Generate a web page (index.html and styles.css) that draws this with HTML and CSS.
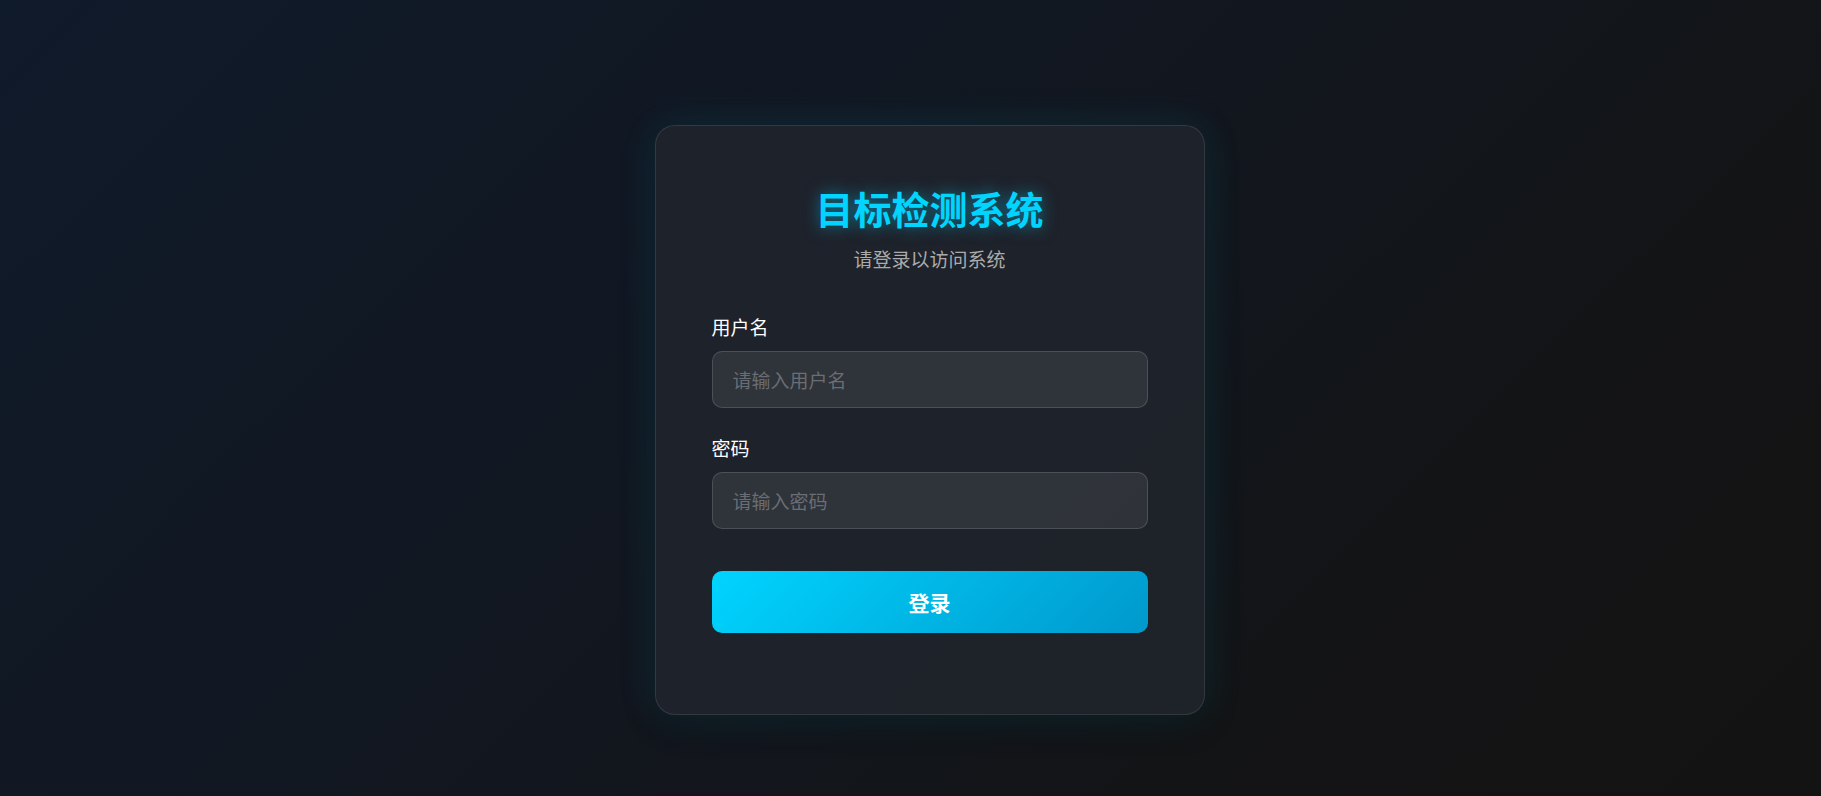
FILE: index.html
```html
<!DOCTYPE html>
<html lang="zh-CN">
<head>
    <meta charset="UTF-8">
    <meta name="viewport" content="width=device-width, initial-scale=1.0">
    <title>目标检测系统 - 登录</title>
    <link rel="stylesheet" href="styles.css">
</head>
<body>
    <!-- Login card -->
    <div class="login-card">
        <div class="login-header">
            <h1>目标检测系统</h1>
            <p>请登录以访问系统</p>
        </div>

        <form class="login-form" onsubmit="return false;">
            <div class="form-group">
                <label for="username">用户名</label>
                <input type="text" id="username" placeholder="请输入用户名">
            </div>
            <div class="form-group">
                <label for="password">密码</label>
                <input type="password" id="password" placeholder="请输入密码">
            </div>
            <button type="submit" class="login-btn">登录</button>
        </form>
    </div>
</body>
</html>
```

FILE: styles.css
```css
/* Reset and basic styles */
* {
    margin: 0;
    padding: 0;
    box-sizing: border-box;
}

body {
    font-family: "Noto Sans CJK SC", "Noto Sans", Arial, sans-serif;
    background: linear-gradient(135deg, #0f1a2a 0%, #121720 45%, #131416 75%, #131313 100%);
    min-height: 100vh;
    display: flex;
    justify-content: center;
    align-items: flex-start;
    padding: 125px 0 0 38px;
    color: #fff;
}

/* Card */
.login-card {
    width: 550px;
    padding: 56px 56px 81px;
    background: rgba(33, 36, 45, 0.85);
    border: 1px solid rgba(255, 255, 255, 0.1);
    border-radius: 20px;
    box-shadow: 0 0 40px rgba(0, 212, 255, 0.12), 0 8px 32px rgba(0, 0, 0, 0.25);
}

.login-header {
    text-align: center;
    margin-bottom: 40px;
}

.login-header h1 {
    font-size: 38px;
    line-height: 52px;
    font-weight: 700;
    color: #00d4ff;
    text-shadow: 0 0 16px rgba(0, 212, 255, 0.5);
    margin-bottom: 11px;
}

.login-header p {
    font-size: 19px;
    line-height: 28px;
    color: #ababab;
}

/* Form */
.form-group {
    margin-bottom: 26px;
}

.form-group label {
    display: block;
    font-size: 19px;
    line-height: 28px;
    color: #fff;
    margin-bottom: 10px;
}

.form-group input {
    display: block;
    width: 100%;
    height: 57px;
    padding: 0 20px;
    font-family: inherit;
    font-size: 19px;
    color: #fff;
    background: rgba(255, 255, 255, 0.08);
    border: 1px solid rgba(255, 255, 255, 0.14);
    border-radius: 10px;
    outline: none;
}

.form-group input::placeholder {
    color: #6a6d73;
}

.login-btn {
    display: block;
    width: 100%;
    height: 62px;
    margin-top: 42px;
    font-family: inherit;
    font-size: 21px;
    font-weight: 700;
    color: #fff;
    background: linear-gradient(135deg, #00d4ff 0%, #0099cc 100%);
    border: none;
    border-radius: 10px;
    cursor: pointer;
}
```
